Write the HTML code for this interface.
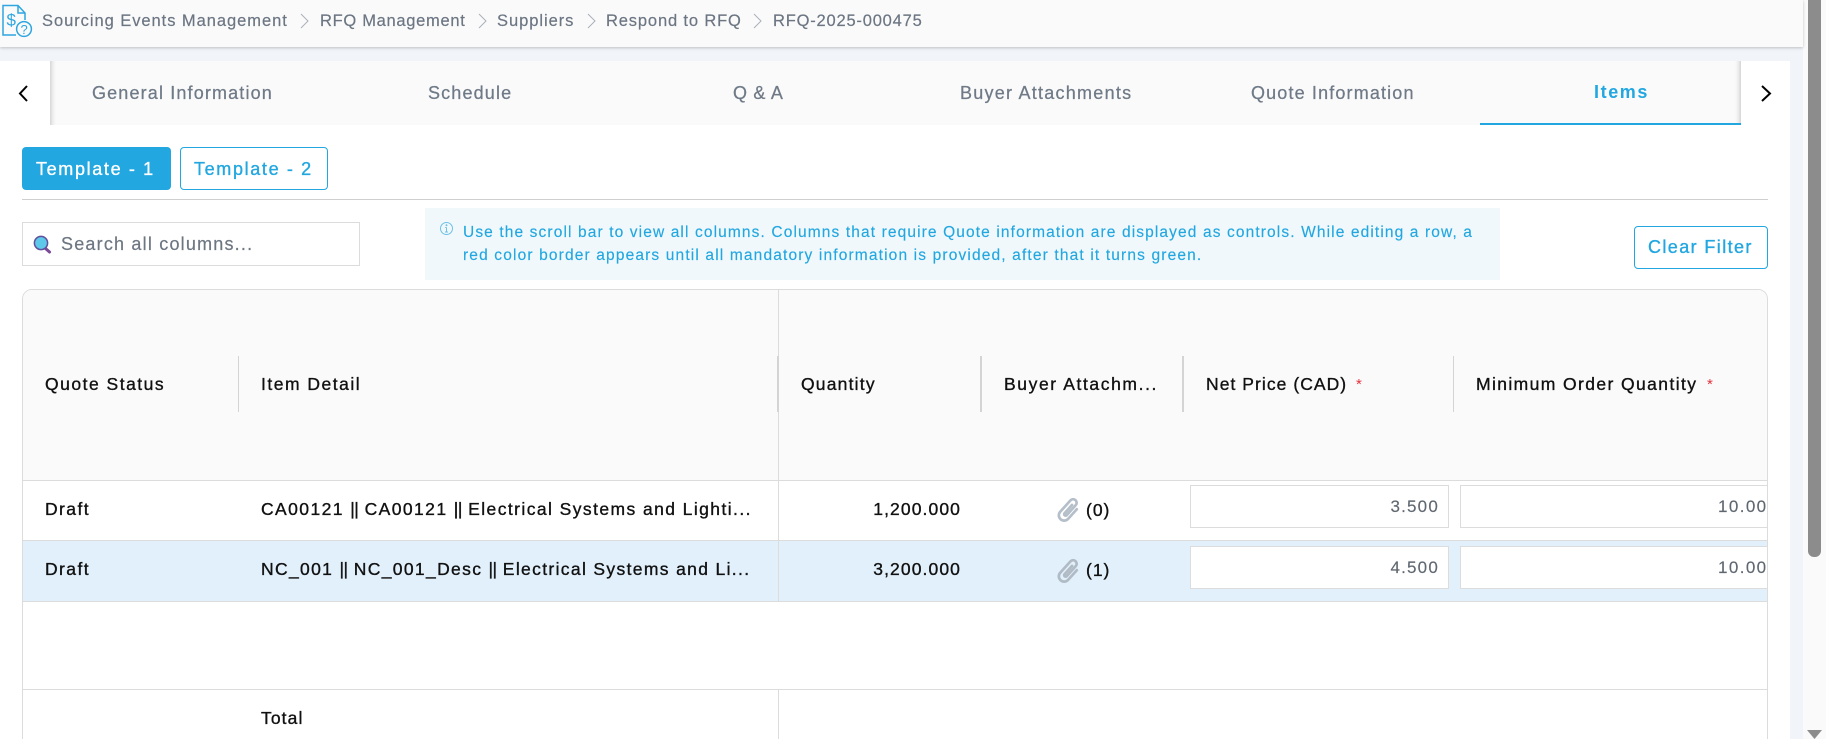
<!DOCTYPE html>
<html lang="en"><head><meta charset="utf-8"><title>RFQ-2025-000475</title>
<style>
html,body{margin:0;padding:0;width:1826px;height:739px;overflow:hidden;background:#fafafa;font-family:"Liberation Sans",Arial,sans-serif}
#p{position:relative;width:1826px;height:739px;overflow:hidden;background:#fafafa}
.a{position:absolute}
.t{position:absolute;white-space:nowrap;line-height:20px;height:20px}
.bc{font-size:16.5px;letter-spacing:.95px;color:#6c7683;top:11px;-webkit-text-stroke:.2px #6c7683}
.tab{font-size:18px;letter-spacing:1.15px;color:#6f7a87;top:83px;-webkit-text-stroke:.25px #6f7a87}
.h{font-size:17.5px;letter-spacing:1.5px;color:#111;top:375px;-webkit-text-stroke:.35px #111}
.c{font-size:17.5px;letter-spacing:1.42px;color:#111;-webkit-text-stroke:.35px #111}
.c b{font-weight:normal;letter-spacing:-.5px}
.inp{position:absolute;box-sizing:border-box;background:#fff;border:1px solid #dcdcdc;height:43px}
.num{font-size:17px;letter-spacing:1.2px;color:#5f6770;top:497px;-webkit-text-stroke:.15px #5f6770}
.sep{position:absolute;top:356px;height:56px;width:2px;background:#d4d4d4}
.info{font-size:15.5px;letter-spacing:1.12px;color:#22a7e0;left:463px;-webkit-text-stroke:.15px #22a7e0}
.btn{font-size:18px;letter-spacing:1.65px;-webkit-text-stroke:.35px}
</style></head><body>
<div id="p">
<!-- page areas -->
<div class="a" style="left:0;top:0;width:1803px;height:47px;background:#fafafa;box-shadow:0 1px 3px rgba(0,0,0,.22);z-index:2"></div>
<div class="a" style="left:0;top:47px;width:1803px;height:692px;background:#f1f5f9"></div>
<div class="a" style="left:0;top:61px;width:1790px;height:678px;background:#fff"></div>
<!-- scrollbar -->
<div class="a" style="left:1808px;top:0;width:13px;height:557px;background:#8c8c8c;border-radius:0 0 6px 6px;z-index:3"></div>
<svg class="a" style="left:1807px;top:730px;z-index:3" width="15" height="9"><path d="M0 0H15L7.5 9Z" fill="#8c8c8c"/></svg>

<div style="position:absolute;left:0;top:0;z-index:4">
<svg class="a" style="left:0;top:0" width="34" height="40" fill="none" stroke="#2ea6e0" stroke-width="1.5">
<path d="M16 35H3V5.5H18L25 13V20"/><path d="M18 5.5V13H25"/>
<circle cx="24" cy="29" r="7.4"/>
<text x="6.5" y="25.5" font-size="17" fill="#2ea6e0" stroke="none" font-family="Liberation Sans">$</text>
<text x="20.5" y="34" font-size="13" fill="#2ea6e0" stroke="none" font-family="Liberation Sans">?</text>
</svg>
<span class="t bc" style="left:42px">Sourcing Events Management</span>
<svg class="a" style="left:299px;top:13px" width="12" height="16" fill="none" stroke="#a9b0b8"><path d="M2 1L9 8L2 15"/></svg>
<span class="t bc" style="left:320px;letter-spacing:.7px">RFQ Management</span>
<svg class="a" style="left:477px;top:13px" width="12" height="16" fill="none" stroke="#a9b0b8"><path d="M2 1L9 8L2 15"/></svg>
<span class="t bc" style="left:497px">Suppliers</span>
<svg class="a" style="left:586px;top:13px" width="12" height="16" fill="none" stroke="#a9b0b8"><path d="M2 1L9 8L2 15"/></svg>
<span class="t bc" style="left:606px;letter-spacing:.85px">Respond to RFQ</span>
<svg class="a" style="left:752px;top:13px" width="12" height="16" fill="none" stroke="#a9b0b8"><path d="M2 1L9 8L2 15"/></svg>
<span class="t bc" style="left:773px;letter-spacing:.8px">RFQ-2025-000475</span>
</div>

<!-- tabs -->
<div class="a" style="left:50px;top:61px;width:1691px;height:64px;background:#fafafa"></div>
<div class="a" style="left:0;top:61px;width:1790px;height:64px;overflow:hidden">
  <div class="a" style="left:-10px;top:-10px;width:60px;height:90px;background:#fff;box-shadow:1px 0 5px rgba(0,0,0,.22)"></div>
  <div class="a" style="left:1741px;top:-10px;width:60px;height:90px;background:#fff;box-shadow:-1px 0 5px rgba(0,0,0,.22)"></div>
</div>
<svg class="a" style="left:17px;top:84px" width="14" height="19" fill="none" stroke="#000" stroke-width="2"><path d="M10 2L3 9.5L10 17"/></svg>
<svg class="a" style="left:1759px;top:84px" width="14" height="19" fill="none" stroke="#000" stroke-width="2"><path d="M3 2L11 9.5L3 17"/></svg>
<span class="t tab" style="left:92px">General Information</span>
<span class="t tab" style="left:428px">Schedule</span>
<span class="t tab" style="left:733px;letter-spacing:.7px">Q &amp; A</span>
<span class="t tab" style="left:960px;letter-spacing:1.25px">Buyer Attachments</span>
<span class="t tab" style="left:1251px">Quote Information</span>
<span class="t tab" style="left:1594px;top:82px;color:#22a7e0;font-weight:bold;font-size:18px;letter-spacing:1.6px;-webkit-text-stroke:0">Items</span>
<div class="a" style="left:1480px;top:123px;width:261px;height:2px;background:#22a7e0"></div>

<!-- template buttons -->
<div class="a" style="left:22px;top:147px;width:149px;height:43px;background:#22a7e0;border-radius:4px"></div>
<span class="t btn" style="left:36px;top:159px;color:#fff">Template - 1</span>
<div class="a" style="left:180px;top:147px;width:148px;height:43px;box-sizing:border-box;border:1px solid #22a7e0;border-radius:4px;background:#fff"></div>
<span class="t btn" style="left:194px;top:159px;color:#22a7e0">Template - 2</span>
<div class="a" style="left:22px;top:199px;width:1746px;height:1px;background:#cfcfcf"></div>

<!-- search -->
<div class="a" style="left:22px;top:222px;width:338px;height:44px;box-sizing:border-box;border:1px solid #dcdcdc;background:#fff"></div>
<svg class="a" style="left:33px;top:235px" width="20" height="19"><path d="M12 13L16.5 17" stroke="#7b4a96" stroke-width="3" stroke-linecap="round"/><circle cx="8" cy="8" r="6.6" fill="#5ec8ea" stroke="#5f4f9c" stroke-width="1.5"/></svg>
<span class="t" style="left:61px;top:234px;font-size:18px;letter-spacing:1.2px;color:#6d7782;-webkit-text-stroke:.2px #6d7782">Search all columns...</span>

<!-- info -->
<div class="a" style="left:425px;top:208px;width:1075px;height:72px;background:#f1f8fc"></div>
<svg class="a" style="left:439px;top:221px" width="15" height="15" fill="none" stroke="#6fc0e6"><circle cx="7.5" cy="7.5" r="6"/><path d="M7.5 6.5V11M6 11H9M6.2 6.5H7.5"/><circle cx="7.5" cy="4.2" r=".5"/></svg>
<span class="t info" style="top:223px">Use the scroll bar to view all columns. Columns that require Quote information are displayed as controls. While editing a row, a</span>
<span class="t info" style="top:246px;letter-spacing:1.15px">red color border appears until all mandatory information is provided, after that it turns green.</span>

<!-- clear filter -->
<div class="a" style="left:1634px;top:226px;width:134px;height:43px;box-sizing:border-box;border:1px solid #22a7e0;border-radius:4px;background:#fff"></div>
<span class="t btn" style="left:1648px;top:237px;letter-spacing:1.4px;color:#22a7e0">Clear Filter</span>

<!-- table -->
<div class="a" style="left:22px;top:289px;width:1746px;height:470px;box-sizing:border-box;border:1px solid #dcdcdc;border-radius:10px;overflow:hidden;background:#fff">
  <div class="a" style="left:0;top:0;width:1746px;height:190px;background:#fafafa;border-bottom:1px solid #dcdcdc"></div>
  <div class="a" style="left:0;top:251px;width:1746px;height:60px;background:#e2f0fb;border-bottom:1px solid #dcdcdc"></div>
  <div class="a" style="left:0;top:250px;width:1746px;height:1px;background:#dcdcdc"></div>
  <div class="a" style="left:0;top:399px;width:1746px;height:1px;background:#dcdcdc"></div>
  <div class="a" style="left:755px;top:0;width:1px;height:311px;background:#dcdcdc"></div>
  <div class="a" style="left:755px;top:400px;width:1px;height:70px;background:#dcdcdc"></div>
  <div class="inp" style="left:1167px;top:195px;width:259px"></div>
  <div class="inp" style="left:1437px;top:195px;width:320px"></div>
  <div class="inp" style="left:1167px;top:256px;width:259px"></div>
  <div class="inp" style="left:1437px;top:256px;width:320px"></div>
</div>
<div class="sep" style="left:238px;width:1px"></div>
<div class="sep" style="left:777px"></div>
<div class="sep" style="left:980px"></div>
<div class="sep" style="left:1182px"></div>
<div class="sep" style="left:1453px;width:1px"></div>

<span class="t h" style="left:45px;top:374px">Quote Status</span>
<span class="t h" style="left:261px;top:374px">Item Detail</span>
<span class="t h" style="left:801px;top:374px;letter-spacing:1.2px">Quantity</span>
<span class="t h" style="left:1004px;top:374px;letter-spacing:1.6px">Buyer Attachm...</span>
<span class="t h" style="left:1206px;top:374px;letter-spacing:1.05px">Net Price (CAD)</span>
<span class="t" style="left:1356px;top:375px;font-size:15px;color:#e4323c">*</span>
<span class="t h" style="left:1476px;top:374px;letter-spacing:1.4px">Minimum Order Quantity</span>
<span class="t" style="left:1707px;top:375px;font-size:15px;color:#e4323c">*</span>

<span class="t c" style="left:45px;top:499px">Draft</span>
<span class="t c" style="left:261px;top:499px">CA00121 <b>||</b> CA00121 <b>||</b> Electrical Systems and Lighti...</span>
<span class="t c" style="right:865px;top:499px;letter-spacing:1.1px">1,200.000</span>
<svg class="a" style="left:1054px;top:496px" width="29" height="29" fill="none" stroke="#b5bfc9" stroke-width="2.3" stroke-linecap="round"><g transform="translate(14.5 14.5) rotate(42) scale(1.18) translate(-12.5 -12.5)"><path d="M17 7V18a4.5 4.5 0 0 1-9 0V5a3 3 0 0 1 6 0V16.5a1 1 0 0 1-2.4 0V7"/></g></svg>
<span class="t c" style="left:1086px;top:500px;letter-spacing:1px">(0)</span>
<span class="t num" style="right:387px">3.500</span>
<span class="t num" style="left:1718px;letter-spacing:1.4px">10.00</span>

<span class="t c" style="left:45px;top:559px">Draft</span>
<span class="t c" style="left:261px;top:559px;letter-spacing:1.34px">NC_001 <b>||</b> NC_001_Desc <b>||</b> Electrical Systems and Li...</span>
<span class="t c" style="right:865px;top:559px;letter-spacing:1.1px">3,200.000</span>
<svg class="a" style="left:1054px;top:557px" width="29" height="29" fill="none" stroke="#b0bbc6" stroke-width="2.3" stroke-linecap="round"><g transform="translate(14.5 14.5) rotate(42) scale(1.18) translate(-12.5 -12.5)"><path d="M17 7V18a4.5 4.5 0 0 1-9 0V5a3 3 0 0 1 6 0V16.5a1 1 0 0 1-2.4 0V7"/></g></svg>
<span class="t c" style="left:1086px;top:560px;letter-spacing:1px">(1)</span>
<span class="t num" style="right:387px;top:558px">4.500</span>
<span class="t num" style="left:1718px;top:558px;letter-spacing:1.4px">10.00</span>

<span class="t c" style="left:261px;top:708px;letter-spacing:1.1px">Total</span>
</div>
</body></html>
